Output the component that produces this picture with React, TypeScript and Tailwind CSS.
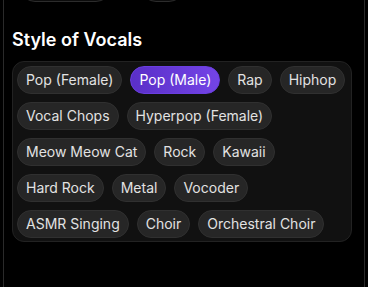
import React from "react";

const vocalStyles = [
    "Pop (Female)",
    "Pop (Male)",
    "Rap",
    "Hiphop",
    "Vocal Chops",
    "Hyperpop (Female)",
    "Meow Meow Cat",
    "Rock",
    "Kawaii",
    "Hard Rock",
    "Metal",
    "Vocoder",
    "ASMR Singing",
    "Choir",
    "Orchestral Choir",
];

const selected = "Pop (Male)";

const App = () => {
    return (
        <div className="h-[287px] w-[368px] overflow-hidden bg-black font-['Inter',sans-serif]">
            <div className="ml-[3px] flex h-full w-[362px] flex-col border-x border-[#2a2a2a] bg-black pl-2 pr-3">
                {/* bottoms of the buttons from the section above */}
                <div className="-mt-[28px] flex gap-[30px] pl-[8px]">
                    <div className="h-[30px] w-[91px] rounded-full border border-[#2c2c2c] bg-[#0c0c0c]" />
                    <div className="h-[30px] w-[43px] rounded-full border border-[#2c2c2c] bg-[#0c0c0c]" />
                </div>

                <h2 className="mt-[24px] text-lg leading-7 font-semibold text-white">Style of Vocals</h2>

                <div className="mt-[7px] flex w-[340px] flex-wrap gap-2 rounded-xl border border-[#222] bg-[#111] px-1 pt-1 pb-[3px]">
                    {vocalStyles.map((style) => (
                        <button
                            key={style}
                            className={
                                style === selected
                                    ? "h-7 rounded-full border border-[#6a3ee0] bg-gradient-to-r from-[#5a2fc8] to-[#7444e6] px-2 text-sm text-white"
                                    : "h-7 rounded-full border border-[#303030] bg-[#262626] px-2 text-sm text-[#e2e2e2]"
                            }
                        >
                            {style}
                        </button>
                    ))}
                </div>
            </div>
        </div>
    );
};

export default App;
